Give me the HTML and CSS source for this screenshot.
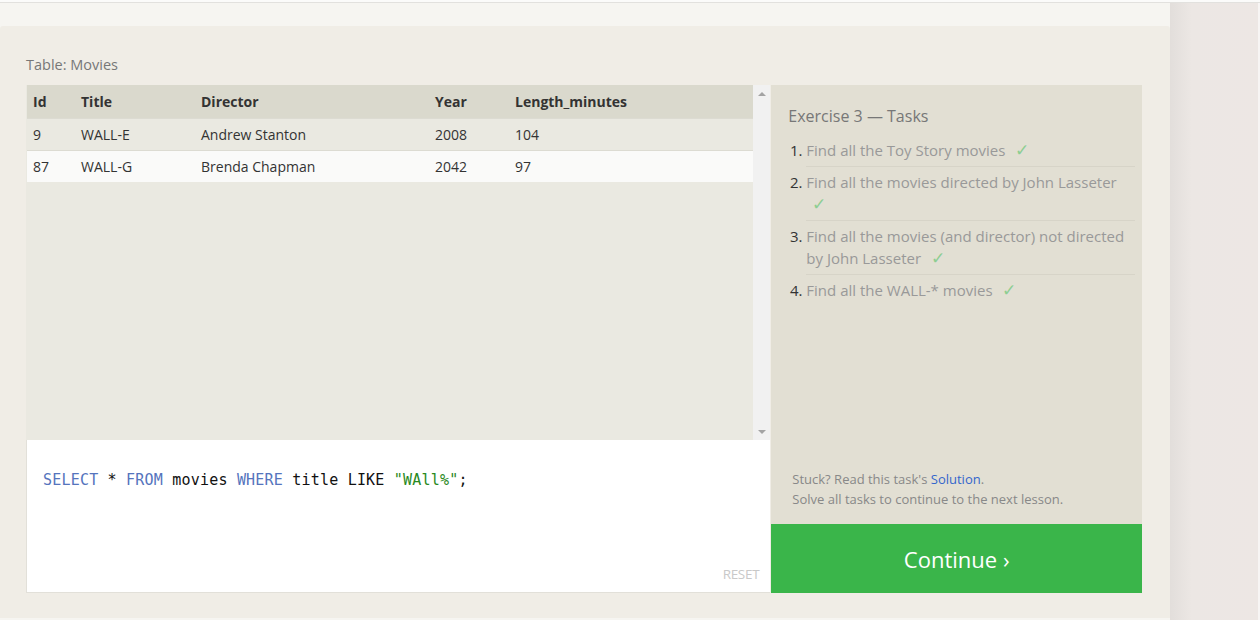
FILE: index.html
```html
<!DOCTYPE html>
<html>
<head>
<meta charset="utf-8">
<link rel="stylesheet" href="styles.css">
</head>
<body>
<div class="topline"></div>
<div class="page">
  <div class="main">
    <div class="panel">
      <div class="caption">Table: Movies</div>
      <div class="grid">
        <div class="left">
          <div class="results">
            <div class="tablewrap">
              <table class="tbl">
                <thead>
                  <tr><th class="c-id">Id</th><th class="c-title">Title</th><th class="c-dir">Director</th><th class="c-year">Year</th><th>Length_minutes</th></tr>
                </thead>
                <tbody>
                  <tr class="odd"><td>9</td><td>WALL-E</td><td>Andrew Stanton</td><td>2008</td><td>104</td></tr>
                  <tr class="even"><td>87</td><td>WALL-G</td><td>Brenda Chapman</td><td>2042</td><td>97</td></tr>
                </tbody>
              </table>
            </div>
            <div class="scrollbar">
              <div class="arrow up"></div>
              <div class="arrow down"></div>
            </div>
          </div>
          <div class="editor">
            <div class="code"><span class="kw">SELECT</span> * <span class="kw">FROM</span> movies <span class="kw">WHERE</span> title LIKE <span class="str">"WAll%"</span>;</div>
            <div class="reset">RESET</div>
          </div>
        </div>
        <div class="right">
          <div class="tasks">
            <div class="tasks-title">Exercise 3 — Tasks</div>
            <ol class="tasklist">
              <li><span class="t">Find all the Toy Story movies</span> <span class="check">✓</span></li>
              <li><span class="t">Find all the movies directed by John Lasseter</span> <span class="check">✓</span></li>
              <li><span class="t">Find all the movies (and director) not directed by John Lasseter</span> <span class="check">✓</span></li>
              <li class="last"><span class="t">Find all the WALL-* movies</span> <span class="check">✓</span></li>
            </ol>
            <div class="help">
              <div>Stuck? Read this task's <a class="link">Solution</a>.</div>
              <div>Solve all tasks to continue to the next lesson.</div>
            </div>
          </div>
          <div class="continue">Continue ›</div>
        </div>
      </div>
    </div>
  </div>
  <div class="side"></div>
</div>
</body>
</html>
```

FILE: styles.css
```css
html, body {
  margin: 0;
  padding: 0;
}
body {
  width: 1260px;
  height: 620px;
  overflow: hidden;
  background: #f6f5f1;
  font-family: "Open Sans", "Noto Sans", sans-serif;
  color: #333;
}
.topline {
  height: 2px;
  background: #fbfbfa;
  border-bottom: 1px solid #e2e1de;
}
.page {
  display: flex;
  height: 617px;
}
.main {
  width: 1170px;
  padding-top: 23px;
  box-sizing: border-box;
}
.panel {
  background: #f0ede6;
  height: 592px;
  border-radius: 3px 3px 0 0;
  padding: 27px 28px 0 26px;
  box-sizing: border-box;
}
.caption {
  font-size: 14.5px;
  color: #777;
  line-height: 20px;
  height: 32px;
  padding-top: 2px;
  box-sizing: border-box;
}
.grid {
  display: flex;
  height: 508px;
}
.left {
  width: 745px;
  display: flex;
  flex-direction: column;
}
.results {
  height: 355px;
  display: flex;
  background: #eae9e1;
  padding-left: 1px;
}
.tablewrap {
  flex: 1;
}
.tbl {
  width: 100%;
  border-collapse: collapse;
  font-size: 14px;
}
.tbl th {
  text-align: left;
  font-weight: 700;
  background: #dad9cd;
  height: 33px;
  padding: 0 6px;
  color: #333;
}
.tbl td {
  height: 31px;
  padding: 0 6px;
  border-top: 1px solid #dcdbd2;
  color: #333;
}
.tbl .odd td { background: #eae9e1; }
.tbl .even td { background: #fafaf9; }
.c-id { width: 36px; }
.c-title { width: 108px; }
.c-dir { width: 222px; }
.c-year { width: 68px; }
.scrollbar {
  width: 17px;
  background: #f1f1f1;
  display: flex;
  flex-direction: column;
  justify-content: space-between;
  align-items: center;
  padding: 7px 0 6px;
  box-sizing: border-box;
}
.arrow {
  width: 0;
  height: 0;
  border-left: 4px solid transparent;
  border-right: 4px solid transparent;
}
.arrow.up { border-bottom: 4px solid #a3a3a3; }
.arrow.down { border-top: 4px solid #a3a3a3; }
.editor {
  flex: 1;
  background: #fff;
  border-left: 1px solid #e2e0d9;
  border-bottom: 1px solid #e2e0d9;
  display: flex;
  flex-direction: column;
  justify-content: space-between;
  padding: 29px 11px 10px 16px;
}
.code {
  font-family: "DejaVu Sans Mono", "Liberation Mono", monospace;
  font-size: 15px;
  letter-spacing: 0.2px;
  line-height: 22px;
  color: #111;
}
.kw { color: #5574bd; }
.str { color: #2a8a1e; }
.reset {
  align-self: flex-end;
  font-size: 13.5px;
  letter-spacing: -0.3px;
  color: #c9c9c9;
  line-height: 16px;
}
.right {
  width: 371px;
  margin-left: 1px;
  display: flex;
  flex-direction: column;
}
.tasks {
  flex: 1;
  background: #e2dfd3;
  padding: 20px 7px 0 17px;
  display: flex;
  flex-direction: column;
}
.tasks-title {
  font-size: 16px;
  color: #777;
  line-height: 22px;
  margin-bottom: 8px;
}
.tasklist {
  margin: 0;
  padding: 0 0 0 18px;
  font-size: 15px;
  color: #333;
}
.tasklist li {
  padding: 4px 0 5px 0;
  line-height: 22px;
  border-bottom: 1px solid #d7d4c8;
}
.tasklist li.last { border-bottom: none; }
.tasklist .t { color: #999; }
.check {
  color: #8dce92;
  font-size: 17px;
  line-height: 20px;
  margin-left: 6px;
}
.help {
  margin-top: auto;
  padding: 0 0 15px 4px;
  font-size: 13px;
  line-height: 20px;
  color: #888;
}
.link { color: #3366cc; }
.continue {
  height: 69px;
  background: #3ab54a;
  color: #fff;
  font-size: 22px;
  display: flex;
  align-items: center;
  justify-content: center;
}
.side {
  width: 90px;
  background: linear-gradient(to right, #e2dedb 0, #ece7e4 22px, #ede7e4 100%);
  border-right: 2px solid #f7f5f4;
  box-sizing: border-box;
}
```
